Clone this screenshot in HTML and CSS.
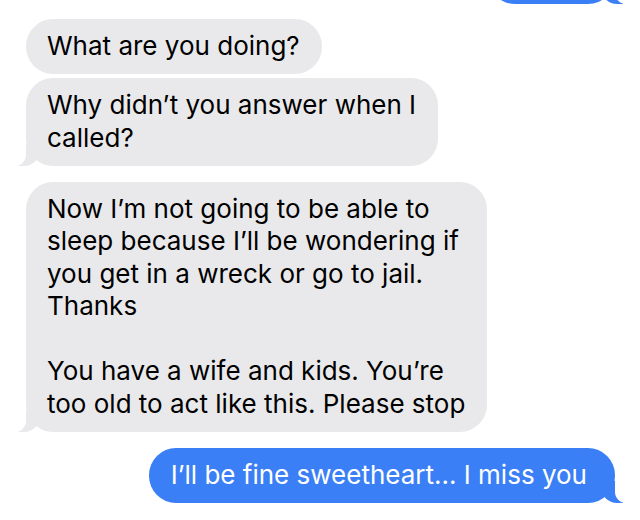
FILE: index.html
```html
<!DOCTYPE html>
<html lang="en">
<head>
  <meta charset="UTF-8">
  <title>Messages</title>
  <link rel="stylesheet" href="styles.css">
</head>
<body>

<div class="thread">
  <div class="group out">
    <div class="msg sent tail peek">&nbsp;</div>
  </div>

  <div class="group in">
    <div class="msg recv">What are you doing?</div>
    <div class="msg recv tail">Why didn’t you answer when I<br>called?</div>
  </div>

  <div class="group in">
    <div class="msg recv tail">Now I’m not going to be able to<br>sleep because I’ll be wondering if<br>you get in a wreck or go to jail.<br>Thanks<br><br>You have a wife and kids. You’re<br>too old to act like this. Please stop</div>
  </div>

  <div class="group out">
    <div class="msg sent tail">I’ll be fine sweetheart... I miss you</div>
  </div>
</div>

</body>
</html>
```

FILE: styles.css
```css
body {
  margin: 0;
  background: #fff;
  font-family: Inter, "Noto Sans", sans-serif;
}

.thread {
  display: flex;
  flex-direction: column;
  gap: 16px;
  padding: 0 25px 0 26px;
  overflow: hidden;
  height: 520px;
  box-sizing: border-box;
}

.group {
  display: flex;
  flex-direction: column;
  gap: 4px;
}

.group.in {
  align-items: flex-start;
}

.group.out {
  align-items: flex-end;
}

.msg {
  position: relative;
  padding: 11px 22px 11.5px 21px;
  border-radius: 27px;
  font-size: 26px;
  line-height: 32.5px;
  white-space: nowrap;
}

.recv {
  background: #e9e9eb;
  color: #000;
}

.sent {
  background: #3a7ff5;
  color: #fff;
  padding-left: 22px;
  padding-right: 28px;
}

.peek {
  width: 77px;
  margin-top: -51px;
  margin-bottom: -1px;
}

/* bubble tails */
.tail::before,
.tail::after {
  content: "";
  position: absolute;
  bottom: 0;
  height: 22px;
}

.recv.tail::before {
  left: -8px;
  width: 22px;
  background: #e9e9eb;
  border-bottom-right-radius: 16px;
}

.recv.tail::after {
  left: -14px;
  width: 14px;
  background: #fff;
  border-bottom-right-radius: 11px;
}

.sent.tail::before {
  right: -8px;
  width: 22px;
  background: #3a7ff5;
  border-bottom-left-radius: 16px;
}

.sent.tail::after {
  right: -14px;
  width: 14px;
  background: #fff;
  border-bottom-left-radius: 11px;
}
```
